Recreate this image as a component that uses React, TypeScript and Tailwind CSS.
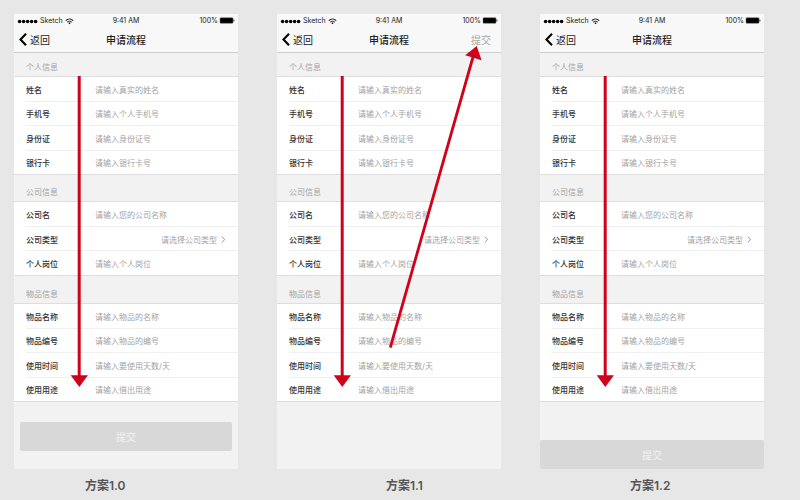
import React, { useId } from "react";

type Field = { label: string; hint: string; select?: boolean };
type Submit = "inline" | "nav" | "footer";

const personal: Field[] = [
  { label: "姓名", hint: "请输入真实的姓名" },
  { label: "手机号", hint: "请输入个人手机号" },
  { label: "身份证", hint: "请输入身份证号" },
  { label: "银行卡", hint: "请输入银行卡号" },
];

const company: Field[] = [
  { label: "公司名", hint: "请输入您的公司名称" },
  { label: "公司类型", hint: "请选择公司类型", select: true },
  { label: "个人岗位", hint: "请输入个人岗位" },
];

const goods: Field[] = [
  { label: "物品名称", hint: "请输入物品的名称" },
  { label: "物品编号", hint: "请输入物品的编号" },
  { label: "使用时间", hint: "请输入要使用天数/天" },
  { label: "使用用途", hint: "请输入借出用途" },
];

function StatusBar() {
  return (
    <div className="grid h-[13px] grid-cols-3 items-center px-[3px] pt-px text-[7px] leading-[12px] text-[#222]">
      <div className="flex items-center gap-[2px]">
        <svg width="21" height="5" viewBox="0 0 21 5" aria-hidden="true">
          {[3, 7, 11, 15, 19].map((x) => (
            <circle key={x} cx={x - 0.4} cy="2.5" r="1.8" fill="#000" />
          ))}
        </svg>
        <span>Sketch</span>
        <svg width="9" height="7" viewBox="0 0 9 7" fill="none" stroke="#111" className="shrink-0" aria-hidden="true">
          <path d="M0.8 2.6C2.9 0.5 6.1 0.5 8.2 2.6" strokeWidth="1.1" />
          <path d="M2.2 4.1C3.5 2.9 5.5 2.9 6.8 4.1" strokeWidth="1" />
          <path d="M3.3 5L4.5 6.3L5.7 5C5 4.4 4 4.4 3.3 5Z" fill="#111" stroke="none" />
        </svg>
      </div>
      <span className="text-center">9:41 AM</span>
      <div className="flex items-center justify-end gap-px">
        <span>100%</span>
        <svg width="16" height="8" viewBox="0 0 16 8" aria-hidden="true">
          <rect x="1" y="0.75" width="13" height="5.5" rx="0.8" fill="#000" stroke="#666" strokeWidth="0.5" />
          <path d="M14.5 2.3C15.8 2.7 15.8 4.3 14.5 4.7Z" fill="#222" />
        </svg>
      </div>
    </div>
  );
}

function NavBar({ submit }: { submit: boolean }) {
  return (
    <nav className="grid h-[26px] grid-cols-3 items-center border-b border-[#cfcfcf] px-[5px] text-[10px] leading-[14px] text-[#222]">
      <button type="button" className="flex items-center gap-[3px] justify-self-start">
        <svg width="8" height="13" viewBox="0 0 8 13" fill="none" stroke="#000" strokeWidth="2.1" aria-hidden="true">
          <path d="M7 0.8L1.5 6.5L7 12.2" />
        </svg>
        返回
      </button>
      <h1 className="text-center font-medium">申请流程</h1>
      {submit && (
        <button type="button" className="justify-self-end pr-[5px] text-[#aaa]">
          提交
        </button>
      )}
    </nav>
  );
}

function Row({ field, first }: { field: Field; first: boolean }) {
  const id = useId();
  return (
    <div className={`ml-3 flex flex-1 ${first ? "" : "border-t border-[#f0f0f0]"}`}>
      <label htmlFor={id} className="flex w-[69px] shrink-0 items-center pt-[2px] font-medium text-[#333]">
        {field.label}
      </label>
      <div className="flex min-w-0 flex-1 items-center pt-[2px]">
        {field.select ? (
          <>
            <select
              id={id}
              defaultValue=""
              className="min-w-0 flex-1 appearance-none bg-transparent text-[#a3a3a3] outline-none [text-align-last:right]"
            >
              <option value="">{field.hint}</option>
            </select>
            <svg width="5" height="7" viewBox="0 0 5 7" fill="none" stroke="#999" className="mr-3 ml-1 shrink-0" aria-hidden="true">
              <path d="M0.8 0.6L3.8 3.5L0.8 6.4" />
            </svg>
          </>
        ) : (
          <input
            id={id}
            type="text"
            placeholder={field.hint}
            className="min-w-0 flex-1 bg-transparent text-[#333] outline-none placeholder:text-[#a3a3a3]"
          />
        )}
      </div>
    </div>
  );
}

function Group({ title, head, body, fields }: { title: string; head: string; body: string; fields: Field[] }) {
  return (
    <section className="text-[8px] leading-[12px]">
      <h2 className={`flex items-end pb-[3px] pl-3 text-[#a3a3a3] ${head}`}>{title}</h2>
      <div className={`flex flex-col border-y border-[#dedede] bg-white ${body}`}>
        {fields.map((f, i) => (
          <Row key={f.label} field={f} first={i === 0} />
        ))}
      </div>
    </section>
  );
}

function Arrows({ diagonal }: { diagonal: boolean }) {
  return (
    <svg
      width="224"
      height="388"
      viewBox="0 0 224 388"
      className="pointer-events-none absolute top-0 left-0"
      fill="#d0021b"
      stroke="#d0021b"
      aria-hidden="true"
    >
      <path d="M65.2 62V363" strokeWidth="3" />
      <path d="M56.7 361.2H73.9L65.3 373Z" stroke="none" />
      {diagonal && (
        <>
          <path d="M113.3 333.5L196 43" strokeWidth="2.8" />
          <path d="M199.7 32L188.2 41.2L204.6 46.2Z" stroke="none" />
        </>
      )}
    </svg>
  );
}

function Scheme({ name, caption, submit }: { name: string; caption: string; submit: Submit }) {
  return (
    <figure className="flex flex-col">
      <div className="relative flex flex-1 flex-col bg-[#f2f2f2]">
        <header className="bg-[#f8f8f8]">
          <StatusBar />
          <NavBar submit={submit === "nav"} />
        </header>
        <Group title="个人信息" head="h-[23px]" body="h-[99px]" fields={personal} />
        <Group title="公司信息" head="h-[26px]" body="h-[75px]" fields={company} />
        <Group title="物品信息" head="h-[27px]" body="h-[99px]" fields={goods} />
        {submit === "inline" && (
          <div className="px-[6px] pt-5 pb-[18px]">
            <button type="button" className="h-[29px] w-full rounded-[2px] bg-[#d8d8d8] pt-[2px] text-[10px] text-[#f2f2f2]">
              提交
            </button>
          </div>
        )}
        {submit === "footer" && (
          <button type="button" className="mt-auto h-[29px] w-full rounded-[2px] bg-[#d8d8d8] pt-[2px] text-[10px] text-[#f2f2f2]">
            提交
          </button>
        )}
        <Arrows diagonal={submit === "nav"} />
      </div>
      <figcaption className={`pt-2 text-[12px] leading-[18px] font-semibold text-[#555] ${caption}`}>{name}</figcaption>
    </figure>
  );
}

export default function App() {
  return (
    <main
      lang="zh-CN"
      className="grid min-h-screen grid-cols-3 content-start gap-[39px] bg-[#e7e7e7] pt-[14px] pr-9 pl-[14px] font-['Inter','Noto_Sans_CJK_SC',sans-serif]"
    >
      <Scheme name="方案1.0" caption="pl-[71px]" submit="inline" />
      <Scheme name="方案1.1" caption="pl-[109px]" submit="nav" />
      <Scheme name="方案1.2" caption="pl-[90px]" submit="footer" />
    </main>
  );
}
